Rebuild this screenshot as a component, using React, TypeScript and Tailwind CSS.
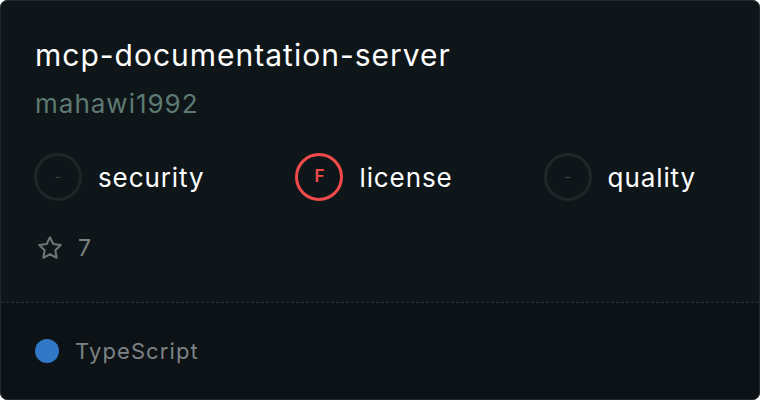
import React from "react";

const scores = [
  { grade: "-", label: "security", failed: false },
  { grade: "F", label: "license", failed: true },
  { grade: "-", label: "quality", failed: false },
];

function Star() {
  return (
    <svg width="28" height="28" viewBox="0 0 24 24" fill="none" stroke="#6e7376" strokeWidth="1.8" strokeLinejoin="round">
      <path d="M12 2.8l2.85 5.78 6.38.93-4.62 4.5 1.09 6.35L12 17.36l-5.7 3 1.09-6.35-4.62-4.5 6.38-.93z" />
    </svg>
  );
}

export default function App() {
  return (
    <div className="w-[760px] h-[400px] bg-white" style={{ fontFamily: "Inter, 'Liberation Sans', sans-serif" }}>
      <div className="w-full h-full flex flex-col rounded-[7px] border border-[#22282c] bg-[#0f1619] overflow-hidden">
        {/* card body */}
        <div className="flex-1 pl-[33px] pr-[34px] pt-[30px]">
          <h1 className="text-[30px] leading-[48px] text-white tracking-[1px] pl-[1px]">mcp-documentation-server</h1>
          <p className="text-[26px] leading-[32px] mt-[9px] text-[#5d7a73] tracking-[1px] pl-[1px]">mahawi1992</p>

          <div className="flex items-center gap-[91px] mt-[33px]">
            {scores.map((s) => (
              <div key={s.label} className="flex items-center gap-4">
                <div
                  className={
                    s.failed
                      ? "w-12 h-12 rounded-full border-[3px] border-[#f24a4a] flex items-center justify-center text-[#f24a4a] text-[17px] font-semibold"
                      : "w-12 h-12 rounded-full border-[3px] border-[#1f2629] flex items-center justify-center text-[#3a4043] text-[15px]"
                  }
                >
                  {s.grade}
                </div>
                <span className="text-[26px] text-white tracking-[0.9px]">{s.label}</span>
              </div>
            ))}
          </div>

          <div className="flex items-center gap-[14px] mt-[30px] pl-[2px]">
            <Star />
            <span className="text-[23px] text-[#7b8083]">7</span>
          </div>
        </div>

        {/* footer */}
        <div className="h-[97px] border-t border-dashed border-[#2a3034] bg-[#0c1215] flex items-center gap-[16px] px-[34px]">
          <span className="w-6 h-6 rounded-full bg-[#3178c6]" />
          <span className="text-[22px] text-[#7d8285] tracking-[1.1px]">TypeScript</span>
        </div>
      </div>
    </div>
  );
}
